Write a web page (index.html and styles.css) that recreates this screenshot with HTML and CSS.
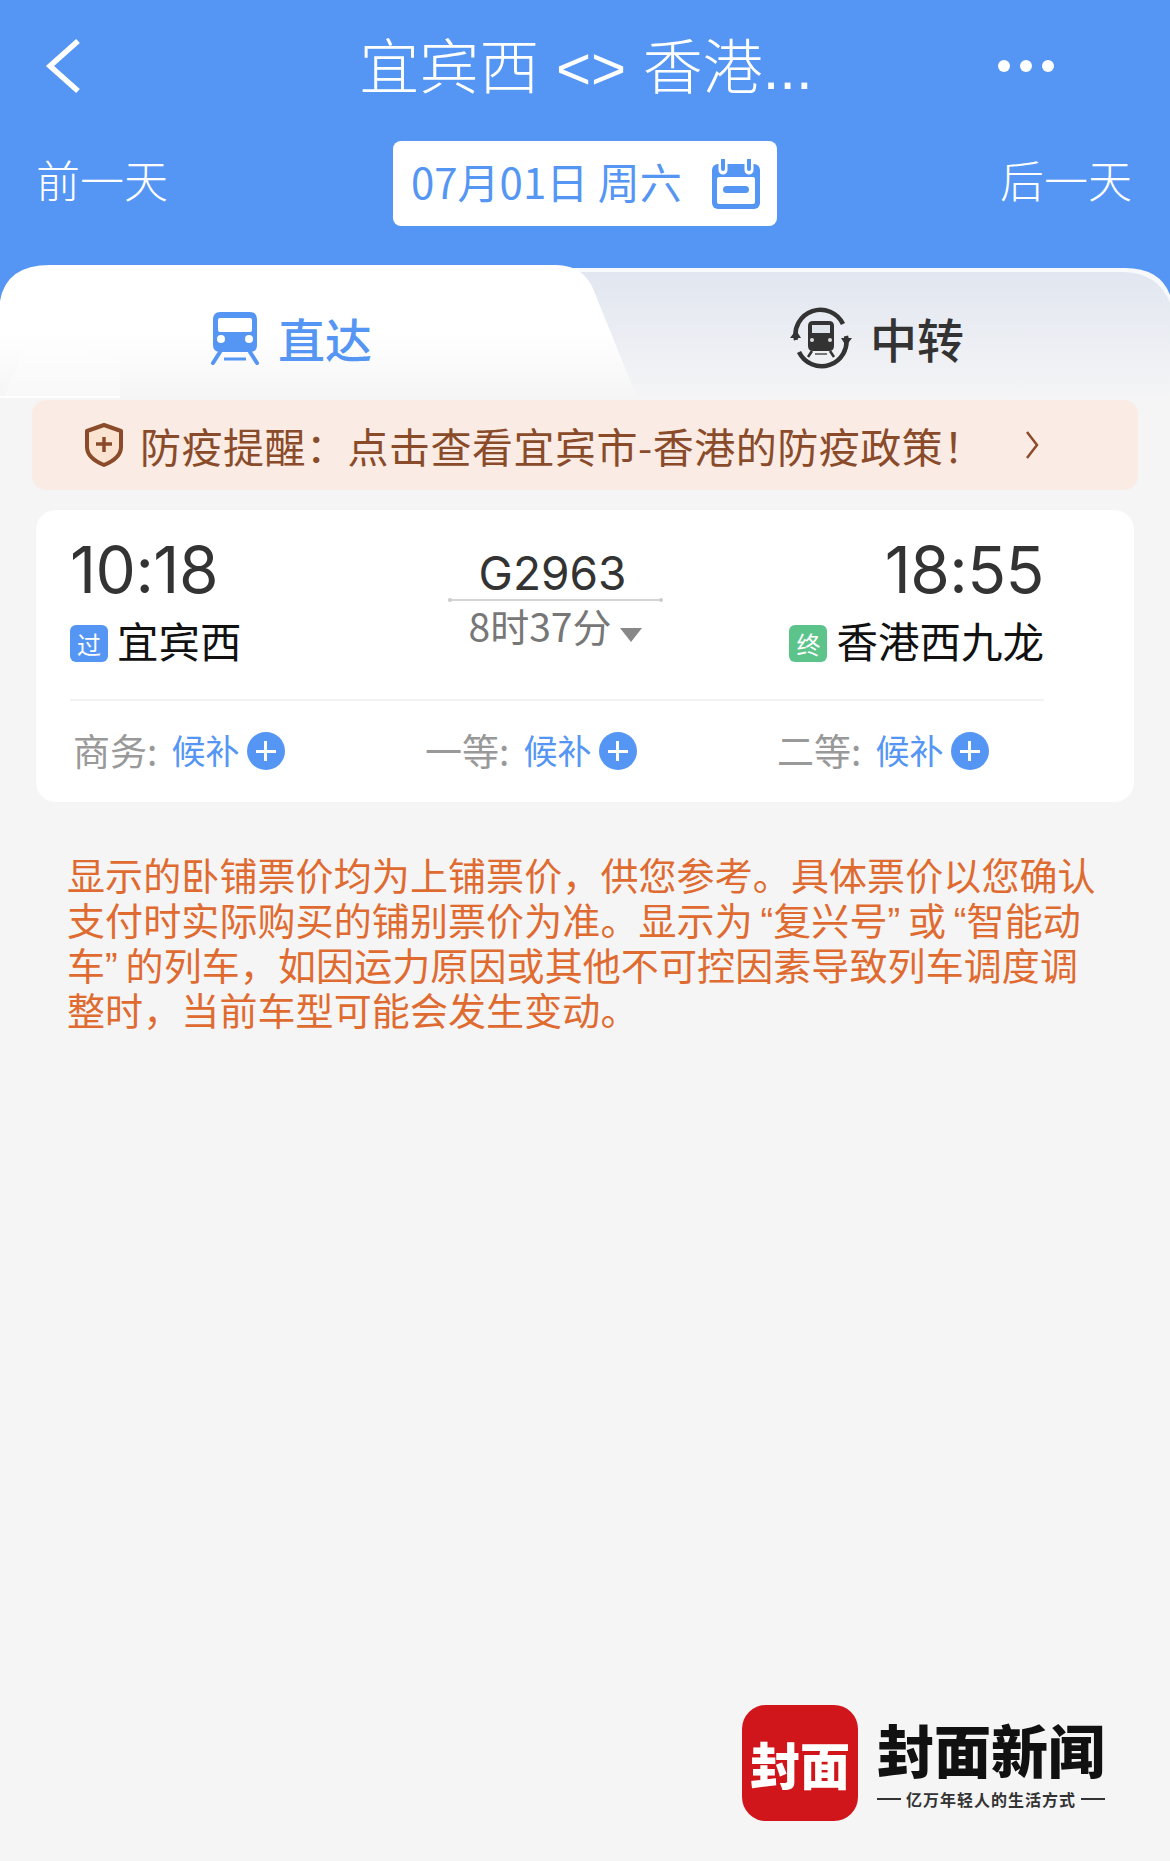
FILE: index.html
```html
<!DOCTYPE html>
<html lang="zh-CN">
<head>
  <meta charset="UTF-8" />
  <meta name="viewport" content="width=device-width, initial-scale=1.0"/>
  <title>宜宾西 - 香港</title>
  <link rel="stylesheet" href="styles.css">
</head>
<body>
  <header class="header">
    <div class="title-row">
      <svg class="back" width="36" height="56" viewBox="0 0 36 56"><path d="M33 3 L5 28 L33 53" fill="none" stroke="#fff" stroke-width="5.5"/></svg>
      <h1 class="title">宜宾西 &lt;&gt; 香港...</h1>
      <div class="dots"><span></span><span></span><span></span></div>
    </div>
    <div class="date-row">
      <span class="day-link">前一天</span>
      <div class="date-box">
        <span class="date-text">07月01日 周六</span>
        <svg width="48" height="50" viewBox="0 0 48 50"><rect x="0" y="5" width="48" height="45" rx="6" fill="#5596f4"/><rect x="5" y="18" width="38" height="27" rx="2" fill="#fff"/><path d="M11 0 V11 M37 0 V11" stroke="#fff" stroke-width="9" stroke-linecap="round"/><path d="M11 1 V10 M37 1 V10" stroke="#5596f4" stroke-width="4" stroke-linecap="round"/><rect x="11" y="27" width="26" height="7" rx="3.5" fill="#5596f4"/></svg>
      </div>
      <span class="day-link">后一天</span>
    </div>
  </header>

  <nav class="tabs">
    <svg class="tabs-bg" width="1170" height="135" viewBox="0 0 1170 135">
      <defs>
        <linearGradient id="offTab" x1="0" y1="0" x2="0" y2="1"><stop offset="0" stop-color="#e1e6f0"/><stop offset="1" stop-color="#f5f5f6"/></linearGradient>
        <linearGradient id="onTab" x1="0" y1="0" x2="0" y2="1"><stop offset="0.5" stop-color="#fff"/><stop offset="1" stop-color="#f5f5f6"/></linearGradient>
      </defs>
      <path d="M540 3 H1125 Q1160 3 1170 30 V135 H540 Z" fill="#f8f9fc"/>
      <path d="M540 7 H1122 Q1158 7 1170 38 V135 H540 Z" fill="url(#offTab)"/>
      <path d="M0 135 V36 Q6 0 50 0 H556 Q584 0 594 26 L638 135 Z" fill="url(#onTab)"/>
      <path d="M4 132 L30 70 L120 96 V132 Z" fill="#fff" opacity="0.3"/>
      <path d="M0 132 H120" stroke="#fff" stroke-width="2"/>
    </svg>
    <div class="tab tab-on">
      <svg width="50" height="54" viewBox="0 0 50 54"><path d="M10 1 H40 Q47 1 47 9 V34 Q47 41 40 41 H10 Q3 41 3 34 V9 Q3 1 10 1 Z" fill="#5596f4"/><rect x="8" y="7" width="34" height="14" rx="2" fill="#fff"/><circle cx="11" cy="28" r="4" fill="#fff"/><circle cx="39" cy="28" r="4" fill="#fff"/><path d="M10 41 L3 52 M40 41 L47 52" stroke="#5596f4" stroke-width="4" stroke-linecap="round"/><path d="M14 48 H36" stroke="#5596f4" stroke-width="3"/></svg>
      <span>直达</span>
    </div>
    <div class="tab tab-off">
      <svg width="62" height="62" viewBox="0 0 62 62"><path d="M6 33 A25 25 0 0 1 53 17 M56 29 A25 25 0 0 1 9 45" fill="none" stroke="#333" stroke-width="4.5"/><path d="M0 31 L11 31 L6 23 Z M62 31 L51 31 L56 39 Z" fill="#333"/><path d="M23 14 H39 Q44 14 44 19 V39 Q44 44 39 44 H23 Q18 44 18 39 V19 Q18 14 23 14 Z" fill="#333"/><rect x="22" y="18" width="18" height="8" fill="#dfe3ea"/><circle cx="22" cy="33" r="2" fill="#ddd"/><circle cx="40" cy="33" r="2" fill="#ddd"/><path d="M22 44 L18 50 M40 44 L44 50" stroke="#333" stroke-width="2.5"/><path d="M25 47 H37" stroke="#777" stroke-width="2"/></svg>
      <span>中转</span>
    </div>
  </nav>

  <div class="notice">
    <svg width="40" height="44" viewBox="0 0 40 44"><path d="M20 2 L37 8 V24 Q37 35 20 42 Q3 35 3 24 V8 Z" fill="#fbe3d2" stroke="#8a4b2b" stroke-width="4" stroke-linejoin="round"/><path d="M20 14 V29 M12 21 H28" stroke="#8a4b2b" stroke-width="3.5"/></svg>
    <span class="notice-text">防疫提醒：点击查看宜宾市-香港的防疫政策！</span>
    <svg class="notice-arrow" width="14" height="30" viewBox="0 0 14 30"><path d="M2 2 L12 15 L2 28" fill="none" stroke="#8a4b2b" stroke-width="2.5"/></svg>
  </div>

  <section class="card">
    <div class="trip">
      <div class="stop">
        <div class="time">10:18</div>
        <div class="station"><span class="tag tag-pass">过</span>宜宾西</div>
      </div>
      <div class="train">
        <div class="train-no">G2963</div>
        <div class="train-line"></div>
        <div class="duration">8时37分<i class="caret"></i></div>
      </div>
      <div class="stop stop-end">
        <div class="time">18:55</div>
        <div class="station"><span class="tag tag-end">终</span>香港西九龙</div>
      </div>
    </div>
    <div class="seats">
      <div class="seat">商务: <b>候补</b><i class="plus"></i></div>
      <div class="seat">一等: <b>候补</b><i class="plus"></i></div>
      <div class="seat">二等: <b>候补</b><i class="plus"></i></div>
    </div>
  </section>

  <p class="tips">显示的卧铺票价均为上铺票价，供您参考。具体票价以您确认支付时实际购买的铺别票价为准。显示为&#8201;“复兴号”&#8201;或&#8201;“智能动车”&#8201;的列车，如因运力原因或其他不可控因素导致列车调度调整时，当前车型可能会发生变动。</p>

  <footer class="brand">
    <div class="brand-icon">封面</div>
    <div class="brand-text">
      <div class="brand-name">封面新闻</div>
      <div class="brand-slogan"><i></i>亿万年轻人的生活方式<i></i></div>
    </div>
  </footer>
</body>
</html>
```

FILE: styles.css
```css
* {
  box-sizing: border-box;
}

body {
  margin: 0;
  height: 1861px;
  display: flex;
  flex-direction: column;
  overflow: hidden;
  background-color: #f5f5f6;
  font-family: "Noto Sans CJK SC", "Noto Sans", sans-serif;
}

.header {
  height: 265px;
  padding: 26px 38px 0 36px;
  background-color: #5596f4;
  color: #fff;
}

.title-row {
  height: 80px;
  display: grid;
  grid-template-columns: 1fr auto 1fr;
  align-items: center;
}

.back {
  margin-left: 9px;
}

.title {
  margin: 6px 0 0 4px;
  font-family: "Liberation Sans", "Noto Sans CJK SC", sans-serif;
  font-size: 60px;
  font-weight: 300;
  line-height: 68px;
  white-space: nowrap;
}

.dots {
  display: flex;
  gap: 10px;
  justify-self: end;
  margin-right: 78px;
}

.dots span {
  width: 12px;
  height: 12px;
  border-radius: 50%;
  background-color: #fff;
}

.date-row {
  margin-top: 35px;
  display: flex;
  align-items: center;
  justify-content: space-between;
}

.day-link {
  margin-bottom: 10px;
  font-size: 44px;
  font-weight: 300;
  line-height: 60px;
}

.date-box {
  width: 384px;
  height: 85px;
  margin-left: 2px;
  padding: 0 17px 0 18px;
  display: flex;
  align-items: center;
  justify-content: space-between;
  background-color: #fff;
  border-radius: 8px;
  color: #5596f4;
  font-size: 42px;
  white-space: nowrap;
}

.date-text {
  margin-bottom: 6px;
}

.tabs {
  position: relative;
  height: 135px;
  display: flex;
  background: linear-gradient(#5596f4 40%, #f5f5f6 40%);
}

.tabs-bg {
  position: absolute;
  left: 0;
  top: 0;
}

.tab {
  position: relative;
  width: 585px;
  display: flex;
  align-items: center;
  font-size: 47px;
  font-weight: 500;
  line-height: 60px;
  padding-top: 10px;
}

.tab svg {
  margin-right: 18px;
}

.tab-on {
  padding-left: 210px;
  color: #5596f4;
}

.tab-off {
  padding-left: 205px;
  color: #333;
}

.notice {
  margin: 0 32px;
  height: 90px;
  padding: 0 0 0 52px;
  display: flex;
  align-items: center;
  background-color: #faece4;
  border-radius: 14px;
  color: #8a4b2b;
  font-size: 41px;
  letter-spacing: 0.5px;
  white-space: nowrap;
}

.notice-text {
  margin-left: 16px;
}

.notice-arrow {
  margin-left: 40px;
}

.card {
  margin: 20px 36px 0;
  height: 292px;
  padding: 22px 34px 0;
  background-color: #fff;
  border-radius: 20px;
}

.trip {
  width: 974px;
  height: 169px;
  display: grid;
  grid-template-columns: 380px 213px 1fr;
  border-bottom: 2px solid #f3f3f3;
}

.time {
  font-family: Inter, "Liberation Sans", sans-serif;
  font-size: 64px;
  line-height: 75px;
  letter-spacing: -0.5px;
  color: #333;
}

.station {
  margin-top: 6px;
  display: flex;
  align-items: center;
  font-size: 41.5px;
  line-height: 54px;
  color: #111;
}

.stop-end {
  text-align: right;
}

.stop-end .station {
  justify-content: flex-end;
}

.tag {
  width: 38px;
  height: 37px;
  margin: 7px 9px 0 0;
  border-radius: 6px;
  font-size: 24px;
  line-height: 37px;
  text-align: center;
  color: #fff;
}

.tag-pass {
  background-color: #5596f4;
}

.tag-end {
  background-color: #5cc48a;
}

.train {
  text-align: center;
  margin-left: -2px;
}

.train-no {
  margin: 17px 0 0 -6px;
  font-family: Inter, "Liberation Sans", sans-serif;
  font-size: 46px;
  line-height: 48px;
  color: #333;
}

.train-line {
  position: relative;
  margin-top: 2px;
  height: 2px;
  background-color: #d5d5d5;
}

.train-line::before,
.train-line::after {
  content: "";
  position: absolute;
  top: -1px;
  width: 4px;
  height: 4px;
  border-radius: 50%;
  background-color: #ccc;
}

.train-line::before {
  left: 0;
}

.train-line::after {
  right: 0;
}

.duration {
  font-size: 39px;
  line-height: 48px;
  color: #777;
}

.caret {
  display: inline-block;
  margin-left: 9px;
  border-left: 11px solid transparent;
  border-right: 11px solid transparent;
  border-top: 14px solid #888;
}

.seats {
  display: grid;
  grid-template-columns: repeat(3, 352px);
  margin-left: 3px;
  padding-top: 24px;
}

.seat {
  display: flex;
  align-items: center;
  font-size: 37px;
  line-height: 50px;
  color: #999;
  white-space: pre;
}

.seat b {
  margin-left: 6px;
  font-weight: 400;
  font-size: 34px;
  color: #5596f4;
}

.plus {
  width: 38px;
  height: 38px;
  margin: 2px 0 0 7px;
  border-radius: 50%;
  background:
    linear-gradient(#fff, #fff) center / 20px 3px no-repeat,
    linear-gradient(#fff, #fff) center / 3px 20px no-repeat,
    #5596f4;
}

.tips {
  margin: 53px 67px 0;
  font-family: "Liberation Sans", "Noto Sans CJK SC", sans-serif;
  font-size: 38px;
  line-height: 45px;
  letter-spacing: 0.1px;
  color: #e06b30;
}

.brand {
  margin-top: auto;
  padding: 0 65px 40px 0;
  display: flex;
  justify-content: flex-end;
  align-items: center;
}

.brand-icon {
  width: 116px;
  height: 116px;
  display: flex;
  align-items: center;
  justify-content: center;
  background-color: #d0161b;
  border-radius: 24px;
  color: #fff;
  font-size: 50px;
  font-weight: 900;
  white-space: nowrap;
}

.brand-text {
  margin-left: 19px;
  width: 228px;
}

.brand-name {
  font-size: 57px;
  font-weight: 900;
  line-height: 62px;
  color: #111;
  white-space: nowrap;
}

.brand-slogan {
  margin-top: 10px;
  display: flex;
  align-items: center;
  justify-content: space-between;
  font-size: 16px;
  font-weight: 700;
  letter-spacing: 1px;
  line-height: 20px;
  color: #333;
  white-space: nowrap;
}

.brand-slogan i {
  width: 24px;
  height: 2px;
  background-color: #333;
}
```
